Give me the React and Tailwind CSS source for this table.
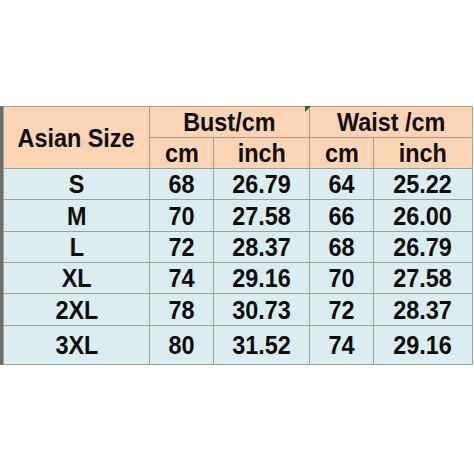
import React from 'react';

const rows = [
  ['S', '68', '26.79', '64', '25.22'],
  ['M', '70', '27.58', '66', '26.00'],
  ['L', '72', '28.37', '68', '26.79'],
  ['XL', '74', '29.16', '70', '27.58'],
  ['2XL', '78', '30.73', '72', '28.37'],
  ['3XL', '80', '31.52', '74', '29.16'],
];

const heights = ['h-[31px]', 'h-[32px]', 'h-[31px]', 'h-[31px]', 'h-[32px]', 'h-[39px]'];

const cell = 'border border-[#9ca394] text-center align-middle p-0 leading-none';

const T = ({ children }) => (
  <span className="inline-block scale-x-[0.9] whitespace-nowrap">{children}</span>
);

const App = () => {
  return (
    <div
      className="w-[474px] h-[474px] bg-white pt-[106px] text-[#0d0d0d] font-bold text-[26px]"
      style={{ fontFamily: '"Liberation Sans", Arial, sans-serif' }}
    >
      <div className="relative w-[472px] border-l-[3px] border-[#6e6e6e]">
        <table className="table-fixed border-collapse w-[469px]">
          <colgroup>
            <col className="w-[146px]" />
            <col className="w-[64px]" />
            <col className="w-[96px]" />
            <col className="w-[64px]" />
            <col className="w-[99px]" />
          </colgroup>
          <thead>
            <tr className="h-[31px] bg-[#fbd4b5]">
              <th rowSpan={2} className={cell}><T>Asian Size</T></th>
              <th colSpan={2} className={cell}><T>Bust/cm</T></th>
              <th colSpan={2} className={cell}><T>Waist /cm</T></th>
            </tr>
            <tr className="h-[31px] bg-[#fbd4b5]">
              <th className={cell}><T>cm</T></th>
              <th className={cell}><T>inch</T></th>
              <th className={cell}><T>cm</T></th>
              <th className={cell}><T>inch</T></th>
            </tr>
          </thead>
          <tbody>
            {rows.map((r, i) => (
              <tr key={r[0]} className={`bg-[#dcedf2] ${heights[i]}`}>
                {r.map((v, j) => (
                  <td key={j} className={cell}><T>{v}</T></td>
                ))}
              </tr>
            ))}
          </tbody>
        </table>
        {/* excel comment marker */}
        <svg className="absolute left-[302px] top-0" width="6" height="6" viewBox="0 0 6 6">
          <polygon points="0,0 6,0 0,6" fill="#1f6b1f" />
        </svg>
      </div>
    </div>
  );
};

export default App;
